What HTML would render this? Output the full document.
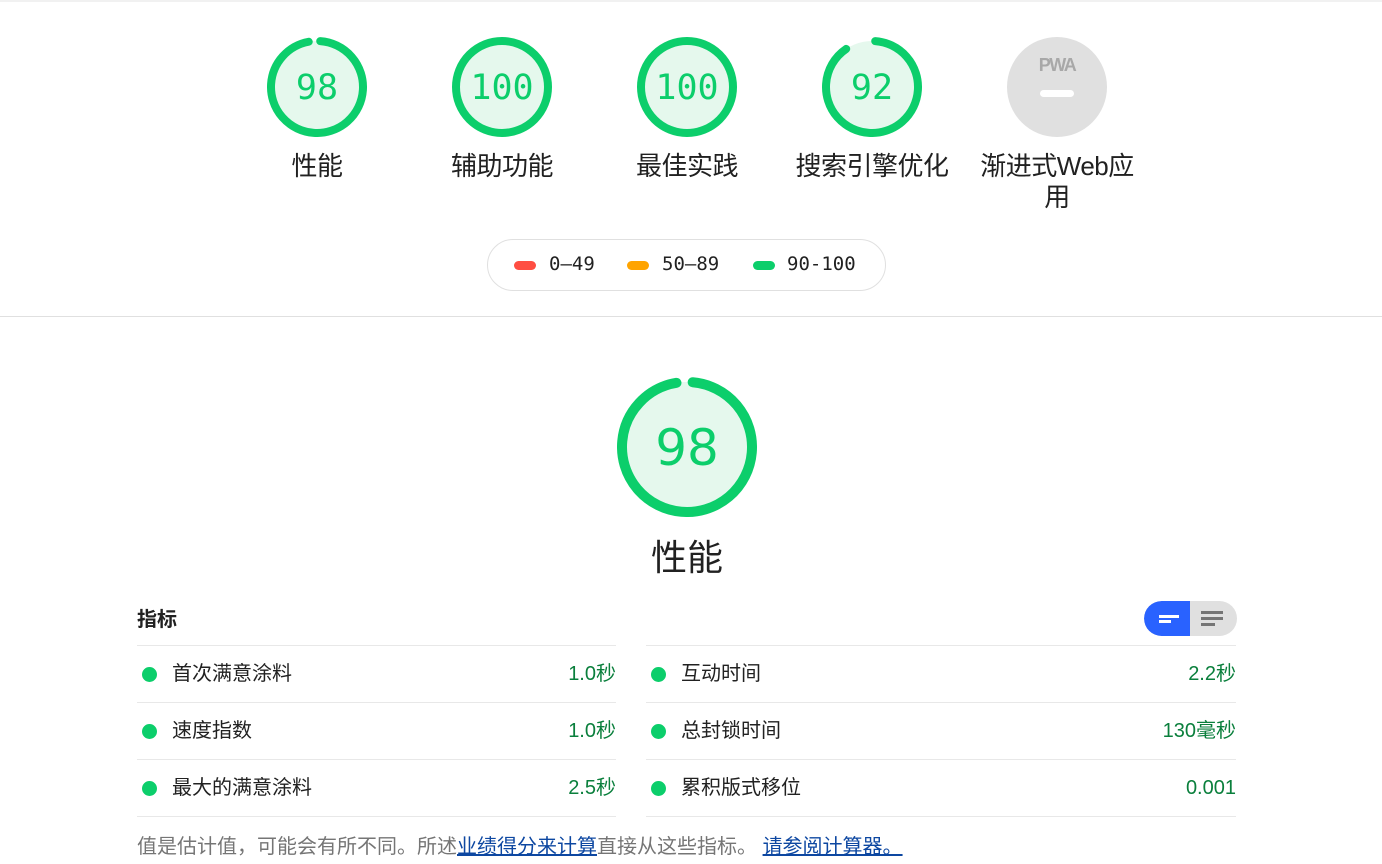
<!DOCTYPE html>
<html><head><meta charset="utf-8"><style>
*{margin:0;padding:0;box-sizing:border-box}
body{width:1382px;height:864px;background:#fff;font-family:"Liberation Sans","Noto Sans CJK SC",sans-serif;position:relative;overflow:hidden;color:#212121}
.a{position:absolute}
.g{position:absolute;width:150px;text-align:center}
.g svg{display:block;margin:0 auto}
.lbl{font-size:26px;line-height:31px;color:#212121;margin-top:14px;letter-spacing:-0.5px}
.num{font-family:"DejaVu Sans Mono","Liberation Mono",monospace;font-size:35px;fill:#0cce6b}
.row{position:absolute;height:57px;border-bottom:1px solid #e8e8e8;font-size:20px;line-height:20px;display:flex;align-items:center}
.row span{display:block}
.row .d{width:15px;height:15px;border-radius:50%;background:#0cce6b;margin:0 15px 0 5px}
.row .v{margin-left:auto;color:#0a7f3c}
</style></head><body>
<div class="a" style="left:0;top:0;width:1382px;height:2px;background:#f1f1f1"></div>

<div class="g" style="left:242px;top:37px">
<svg width="100" height="100"><circle cx="50" cy="50" r="46" fill="#e5f8ed"/><circle cx="50" cy="50" r="46" fill="none" stroke="#0cce6b" stroke-width="8" stroke-linecap="round" stroke-dasharray="277 300" transform="rotate(-86 50 50)"/><text x="50" y="62" text-anchor="middle" class="num">98</text></svg>
<div class="lbl">性能</div></div>
<div class="g" style="left:427px;top:37px">
<svg width="100" height="100"><circle cx="50" cy="50" r="46" fill="#e5f8ed" stroke="#0cce6b" stroke-width="8"/><text x="50" y="62" text-anchor="middle" class="num">100</text></svg>
<div class="lbl">辅助功能</div></div>
<div class="g" style="left:612px;top:37px">
<svg width="100" height="100"><circle cx="50" cy="50" r="46" fill="#e5f8ed" stroke="#0cce6b" stroke-width="8"/><text x="50" y="62" text-anchor="middle" class="num">100</text></svg>
<div class="lbl">最佳实践</div></div>
<div class="g" style="left:787px;top:37px;width:170px">
<svg width="100" height="100"><circle cx="50" cy="50" r="46" fill="#e5f8ed"/><circle cx="50" cy="50" r="46" fill="none" stroke="#0cce6b" stroke-width="8" stroke-linecap="round" stroke-dasharray="258 300" transform="rotate(-86 50 50)"/><text x="50" y="62" text-anchor="middle" class="num">92</text></svg>
<div class="lbl">搜索引擎优化</div></div>
<div class="g" style="left:967px;top:37px;width:180px">
<svg width="100" height="100"><circle cx="50" cy="50" r="50" fill="#e0e0e0"/><text x="50" y="34" text-anchor="middle" font-family="Liberation Sans,sans-serif" font-weight="bold" font-size="18" fill="#a8a8a8" letter-spacing="-1.5">PWA</text><rect x="33" y="53" width="34" height="7" rx="3.5" fill="#fff"/></svg>
<div class="lbl">渐进式Web应<br>用</div></div>

<div class="a" style="left:487px;top:239px;width:399px;height:52px;border:1px solid #e0e0e0;border-radius:26px;font-family:'DejaVu Sans Mono','Liberation Mono',monospace;font-size:19px;color:#212121">
<span class="a" style="left:26px;top:21px;width:22px;height:9px;border-radius:5px;background:#ff4e42"></span><span class="a" style="left:61px;top:13px">0–49</span>
<span class="a" style="left:139px;top:21px;width:22px;height:9px;border-radius:5px;background:#ffa400"></span><span class="a" style="left:174px;top:13px">50–89</span>
<span class="a" style="left:265px;top:21px;width:22px;height:9px;border-radius:5px;background:#0cce6b"></span><span class="a" style="left:299px;top:13px">90-100</span>
</div>
<div class="a" style="left:0;top:316px;width:1382px;height:1px;background:#e0e0e0"></div>

<svg class="a" style="left:617px;top:377px" width="140" height="140"><circle cx="70" cy="70" r="65" fill="#e5f8ed"/><circle cx="70" cy="70" r="65" fill="none" stroke="#0cce6b" stroke-width="10" stroke-linecap="round" stroke-dasharray="392 420" transform="rotate(-85 70 70)"/><text x="70" y="88" text-anchor="middle" font-family="DejaVu Sans,sans-serif" font-size="50" fill="#0cce6b">98</text></svg>
<div class="a" style="left:587px;top:536px;width:200px;text-align:center;font-size:36px;line-height:44px">性能</div>

<div class="a" style="left:137px;top:607px;font-size:20px;font-weight:bold;line-height:26px">指标</div>
<div class="a" style="left:1144px;top:601px;width:93px;height:35px;border-radius:18px;background:#e0e0e0;overflow:hidden">
<div class="a" style="left:0;top:0;width:46px;height:35px;background:#2962ff;border-radius:18px 0 0 18px"></div>
<div class="a" style="left:15px;top:14px;width:20px;height:3px;background:#fff"></div><div class="a" style="left:15px;top:19px;width:12px;height:3px;background:#fff"></div>
<div class="a" style="left:57px;top:10px;width:22px;height:3px;background:#757575"></div><div class="a" style="left:57px;top:16px;width:22px;height:3px;background:#757575"></div><div class="a" style="left:57px;top:22px;width:14px;height:3px;background:#757575"></div>
</div>
<div class="a" style="left:137px;top:645px;width:479px;height:1px;background:#e8e8e8"></div>
<div class="a" style="left:646px;top:645px;width:590px;height:1px;background:#e8e8e8"></div>
<div class="row" style="left:137px;top:646px;width:479px"><span class="d"></span><span>首次满意涂料</span><span class="v">1.0秒</span></div>
<div class="row" style="left:137px;top:703px;width:479px"><span class="d"></span><span>速度指数</span><span class="v">1.0秒</span></div>
<div class="row" style="left:137px;top:760px;width:479px"><span class="d"></span><span>最大的满意涂料</span><span class="v">2.5秒</span></div>
<div class="row" style="left:646px;top:646px;width:590px"><span class="d"></span><span>互动时间</span><span class="v">2.2秒</span></div>
<div class="row" style="left:646px;top:703px;width:590px"><span class="d"></span><span>总封锁时间</span><span class="v">130毫秒</span></div>
<div class="row" style="left:646px;top:760px;width:590px"><span class="d"></span><span>累积版式移位</span><span class="v">0.001</span></div>
<div class="a" style="left:137px;top:833px;font-size:20px;line-height:28px;color:#757575;white-space:nowrap">值是估计值，可能会有所不同。所述<a style="color:#0d47a1;text-decoration:underline">业绩得分来计算</a>直接从这些指标。 <a style="color:#0d47a1;text-decoration:underline">请参阅计算器。</a></div>
</body></html>
